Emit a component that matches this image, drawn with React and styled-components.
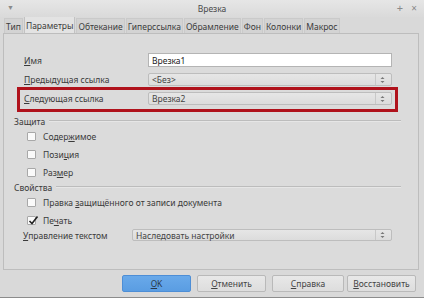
import React from "react";
import styled, { createGlobalStyle } from "styled-components";

const Global = createGlobalStyle`
  html, body { margin: 0; padding: 0; background: #d8d8d8; }
  body { font-family: "Noto Sans", "Open Sans", sans-serif; }
  #root { width: 424px; height: 298px; }
`;

const Window = styled.div`
  width: 424px;
  height: 298px;
  box-sizing: border-box;
  background: #d9d9d9;
  border-bottom: 1px solid #8c8c8c;
  display: flex;
  flex-direction: column;
  font-family: "Noto Sans", "Open Sans", sans-serif;
  font-size: 8.5px;
  color: #3a3a3a;
`;

const TitleBar = styled.div`
  height: 17px;
  position: relative;
  display: flex;
  align-items: center;
  justify-content: center;
  background: linear-gradient(#e6e6e6, #dadada);
`;

const Title = styled.span`
  font-size: 8.5px;
  color: #4a4a4a;
`;

const TitleIcon = styled.span`
  position: absolute;
  top: 2px;
  left: ${(p) => p.$left ?? "auto"};
  right: ${(p) => p.$right ?? "auto"};
  font-size: ${(p) => p.$size || 10}px;
  color: #8a8a8a;
  line-height: 12px;
`;

const Tabs = styled.div`
  height: 16px;
  display: flex;
  align-items: stretch;
  padding-left: 4px;
`;

const Tab = styled.div`
  padding: 0 1px;
  display: flex;
  align-items: center;
  font-size: 8.5px;
  color: #3c3c3c;
  background: ${(p) => (p.$active ? "#e3e3e3" : "#d3d3d3")};
  border: 1px solid ${(p) => (p.$active ? "#c2c2c2" : "#cacaca")};
  border-bottom: none;
  margin-right: 1px;
  ${(p) => (p.$active ? "margin-top: -1px;" : "margin-top: 1px;")}
`;

const Panel = styled.div`
  margin-left: 3px;
  width: 416px;
  height: 237px;
  box-sizing: border-box;
  border: 1px solid #bdbdbd;
  background: #dbdbdb;
  padding-top: 19px;
  display: flex;
  flex-direction: column;
`;

const FormRow = styled.div`
  display: grid;
  grid-template-columns: ${(p) => p.$labelW || 124}px ${(p) => p.$ctrlW || 244}px;
  align-items: center;
  height: ${(p) => p.$h}px;
  margin-left: ${(p) => p.$ml ?? 20}px;
  margin-bottom: ${(p) => p.$mb || 0}px;
`;

const Highlight = styled.div`
  margin-left: 13px;
  width: 381px;
  height: 25px;
  box-sizing: border-box;
  border: 3px solid #b0121c;
  padding: 2px 0 0 4px;
`;

const Label = styled.span`
  font-size: 8.5px;
  color: #3a3a3a;
  white-space: nowrap;
`;

const U = styled.span`
  text-decoration: underline;
`;

const TextInput = styled.div`
  height: 14px;
  box-sizing: border-box;
  background: #ffffff;
  border: 1px solid #b4b4b4;
  padding-left: 3px;
  display: flex;
  align-items: center;
  font-size: 8.5px;
  color: #222;
`;

const Select = styled.div`
  height: ${(p) => p.$h || 13}px;
  box-sizing: border-box;
  background: linear-gradient(#e6e6e6, #dcdcdc);
  border: 1px solid #bdbdbd;
  border-radius: 2px;
  padding-left: 3px;
  display: flex;
  align-items: center;
  font-size: 8.5px;
  color: #444;
`;

const SelectText = styled.span`
  flex: 1;
`;

const Spinner = styled.span`
  width: 13px;
  height: 100%;
  border-left: 1px solid #c8c8c8;
  display: flex;
  align-items: center;
  justify-content: center;
  margin-right: 2px;
`;

const SectionHead = styled.div`
  height: 12px;
  display: flex;
  align-items: center;
  margin-left: 10px;
  margin-right: 17px;
  margin-top: ${(p) => p.$mt || 0}px;
  gap: 4px;
  font-size: 8.5px;
  color: #3a3a3a;
`;

const Rule = styled.div`
  flex: 1;
  height: 1px;
  background: #bcbcbc;
  border-bottom: 1px solid #e6e6e6;
`;

const CheckRow = styled.div`
  height: 18px;
  display: flex;
  align-items: center;
  margin-left: 23px;
  gap: 7px;
`;

const Box = styled.span`
  width: 9px;
  height: 9px;
  box-sizing: border-box;
  background: #fafafa;
  border: 1px solid #a8a8a8;
  border-radius: 1px;
  position: relative;
`;

const Tick = styled.svg`
  position: absolute;
  left: 0px;
  top: -2px;
`;

const Footer = styled.div`
  flex: 1;
  display: flex;
  align-items: center;
  justify-content: flex-end;
  padding-right: 8px;
`;

const Button = styled.div`
  width: ${(p) => p.$w}px;
  height: 17px;
  box-sizing: border-box;
  margin-left: ${(p) => p.$ml || 0}px;
  display: flex;
  align-items: center;
  justify-content: center;
  font-size: 8.5px;
  border-radius: 2px;
  color: ${(p) => (p.$primary ? "#2a3a4a" : "#444")};
  background: ${(p) =>
    p.$primary ? "linear-gradient(#69a9ea, #5a9de2)" : "linear-gradient(#e8e8e8, #dddddd)"};
  border: 1px solid ${(p) => (p.$primary ? "#4d8ed6" : "#b9b9b9")};
`;

const Updown = () => (
  <svg width="5" height="8" viewBox="0 0 5 8">
    <path d="M0.5 3 L2.5 1 L4.5 3 Z" fill="#777" />
    <path d="M0.5 5 L2.5 7 L4.5 5 Z" fill="#777" />
  </svg>
);

const Check = ({ checked, children }) => (
  <CheckRow>
    <Box>
      {checked && (
        <Tick width="11" height="11" viewBox="0 0 11 11">
          <path d="M1.5 6 L4 8.5 L9.5 1.5" stroke="#222" strokeWidth="1.6" fill="none" />
        </Tick>
      )}
    </Box>
    <Label>{children}</Label>
  </CheckRow>
);

export default function App() {
  return (
    <>
      <Global />
      <Window>
        <TitleBar>
          <TitleIcon $left="7px" $size={7}>▼</TitleIcon>
          <Title>Врезка</Title>
          <TitleIcon $right="21px" $size={11}>+</TitleIcon>
          <TitleIcon $right="7px" $size={10}>×</TitleIcon>
        </TitleBar>
        <Tabs>
          <Tab>Тип</Tab>
          <Tab $active>Параметры</Tab>
          <Tab>Обтекание</Tab>
          <Tab>Гиперссылка</Tab>
          <Tab>Обрамление</Tab>
          <Tab>Фон</Tab>
          <Tab>Колонки</Tab>
          <Tab>Макрос</Tab>
        </Tabs>
        <Panel>
          <FormRow $h={14} $mb={6}>
            <Label><U>И</U>мя</Label>
            <TextInput>Врезка1</TextInput>
          </FormRow>
          <FormRow $h={13} $mb={1}>
            <Label><U>П</U>редыдущая ссылка</Label>
            <Select>
              <SelectText>&lt;Без&gt;</SelectText>
              <Spinner><Updown /></Spinner>
            </Select>
          </FormRow>
          <Highlight>
            <FormRow $h={13} $ml={0}>
              <Label><U>С</U>ледующая ссылка</Label>
              <Select>
                <SelectText>Врезка2</SelectText>
                <Spinner><Updown /></Spinner>
              </Select>
            </FormRow>
          </Highlight>
          <SectionHead $mt={3}>
            Защита
            <Rule />
          </SectionHead>
          <Check>Содер<U>ж</U>имое</Check>
          <Check>Пози<U>ц</U>ия</Check>
          <Check>Раз<U>м</U>ер</Check>
          <SectionHead>
            Свойства
            <Rule />
          </SectionHead>
          <Check>Правка <U>з</U>ащищённого от записи документа</Check>
          <Check checked>Пе<U>ч</U>ать</Check>
          <FormRow $h={12} $ml={19} $labelW={109} $ctrlW={260}>
            <Label><U>У</U>правление текстом</Label>
            <Select $h={12}>
              <SelectText>Наследовать настройки</SelectText>
              <Spinner><Updown /></Spinner>
            </Select>
          </FormRow>
        </Panel>
        <Footer>
          <Button $primary $w={69}><U>О</U>K</Button>
          <Button $w={69} $ml={6}><U>О</U>тменить</Button>
          <Button $w={72} $ml={6}><U>С</U>правка</Button>
          <Button $w={69} $ml={3}><U>В</U>осстановить</Button>
        </Footer>
      </Window>
    </>
  );
}
